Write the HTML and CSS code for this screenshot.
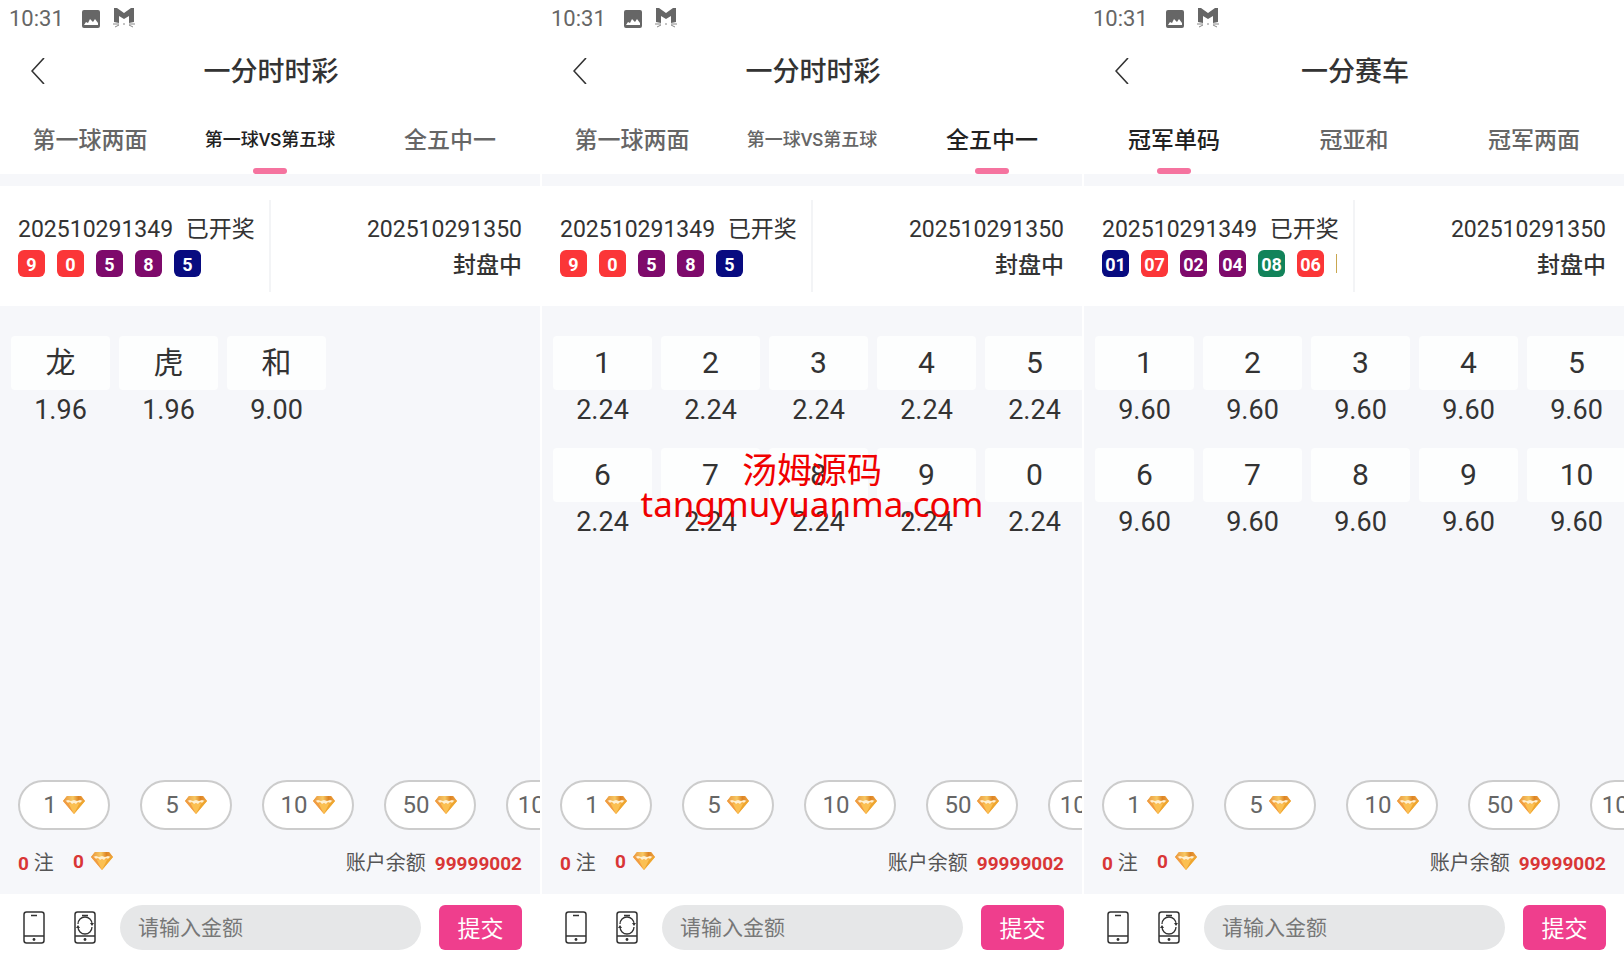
FILE: index.html
```html
<!DOCTYPE html>
<html lang="zh-CN">
<head>
  <meta charset="UTF-8" />
  <meta name="viewport" content="width=device-width, initial-scale=1" />
  <title>一分时时彩</title>
  <link rel="stylesheet" href="styles.css">
</head>
<body>
  <svg class="sprite" aria-hidden="true">
    <defs>
      <linearGradient id="gold" x1="0" y1="0" x2="1" y2="0">
        <stop offset="0" stop-color="#e8923a" />
        <stop offset="0.45" stop-color="#f7c964" />
        <stop offset="0.7" stop-color="#dd8424" />
        <stop offset="1" stop-color="#efa544" />
      </linearGradient>
      <symbol id="diamond" viewBox="0 0 22 18">
        <path d="M4 0h14l4 5-11 13L0 5z" fill="#f8b348" />
        <path d="M4 0h14l4 5H0z" fill="url(#gold)" />
        <path d="M2 5l3-1 3 1 3-1 3 1 3-1 3 1-2 2-3-1-2 2-2-1-2 1-2-2-3 1z" fill="#fff0d0" />
        <path d="M0 5l3 0 3 3 5 10z" fill="#f19c42" />
        <path d="M6 8l5 0 5 0-5 10z" fill="#fbc052" />
        <path d="M22 5l-3 0-3 3-5 10z" fill="#eea62f" />
      </symbol>
      <symbol id="picture" viewBox="0 0 18 18">
        <path fill-rule="evenodd" fill="#666" d="M2 0h14a2 2 0 0 1 2 2v14a2 2 0 0 1-2 2H2a2 2 0 0 1-2-2V2a2 2 0 0 1 2-2zM2 15h14v-2l-3-4-2 3-3-3-2 4-2-1z" />
      </symbol>
      <symbol id="mask" viewBox="0 0 22 21">
        <path fill="#666" d="M1 0h3l7 5 7-5h3v14l-5 1V8l-5 3-5-3v7l-5-1z" />
        <path fill="none" stroke="#888" d="M0 16l6 0M2 19l4-2M22 16l-6 0M20 19l-4-2M10 16h2" />
      </symbol>
      <symbol id="back" viewBox="0 0 14 26">
        <path fill="none" stroke="#333" stroke-width="1.6" d="M13 0L1 13l12 13" />
      </symbol>
      <symbol id="phone" viewBox="0 0 22 33">
        <rect x="1" y="1" width="20" height="31" rx="2.5" fill="none" stroke="#333" stroke-width="1.5" />
        <path fill="none" stroke="#333" stroke-width="1.5" d="M8 4.500h6M1 25h20" />
        <circle cx="11" cy="28.500" r="1.400" fill="#333" />
      </symbol>
      <symbol id="shake" viewBox="0 0 22 33">
        <rect x="1" y="1" width="20" height="31" rx="2.5" fill="none" stroke="#333" stroke-width="1.5" />
        <path fill="none" stroke="#333" stroke-width="1.5" d="M8 4.500h6M1 25h20" />
        <path fill="none" stroke="#333" stroke-width="1.300" d="M4 13a7 7 0 0 1 14 0M18 16a7 7 0 0 1-14 0" />
        <path fill="#333" d="M2 17l2-3 2 3zM20 12l-2 3-2-3z" />
        <circle cx="11" cy="28.500" r="1.400" fill="#333" />
      </symbol>
    </defs>
  </svg>

  <main class="screens">
    <section class="screen">
      <div class="status"><span>10:31</span><svg class="icon-picture"><use href="#picture" /></svg><svg class="icon-mask"><use href="#mask" /></svg></div>
      <header class="title-bar">
        <button class="back" aria-label="返回"><svg><use href="#back" /></svg></button>
        <h1>一分时时彩</h1>
      </header>
      <nav class="tabs">
        <button>第一球两面</button>
        <button class="small active">第一球VS第五球</button>
        <button>全五中一</button>
      </nav>
      <div class="draw">
        <div class="draw-last">
          <p>202510291349 <span>已开奖</span></p>
          <div class="balls"><b class="red">9</b><b class="red">0</b><b class="purple">5</b><b class="purple">8</b><b class="navy">5</b></div>
        </div>
        <div class="draw-next">
          <p>202510291350</p>
          <strong>封盘中</strong>
        </div>
      </div>
      <div class="bets">
        <div class="bet-grid">
          <button><span>龙</span>1.96</button>
          <button><span>虎</span>1.96</button>
          <button><span>和</span>9.00</button>
        </div>
      </div>
      <div class="chips">
        <button>1<svg><use href="#diamond" /></svg></button>
        <button>5<svg><use href="#diamond" /></svg></button>
        <button>10<svg><use href="#diamond" /></svg></button>
        <button>50<svg><use href="#diamond" /></svg></button>
        <button>100<svg><use href="#diamond" /></svg></button>
      </div>
      <div class="summary">
        <p><b>0</b> 注</p>
        <p class="stake"><b>0</b><svg><use href="#diamond" /></svg></p>
        <p class="balance">账户余额<b>99999002</b></p>
      </div>
      <form class="submit-bar">
        <button type="button" class="tool" aria-label="手机"><svg><use href="#phone" /></svg></button>
        <button type="button" class="tool" aria-label="摇一摇"><svg><use href="#shake" /></svg></button>
        <input type="text" placeholder="请输入金额" aria-label="请输入金额">
        <button type="button" class="submit">提交</button>
      </form>
    </section>

    <section class="screen">
      <div class="status"><span>10:31</span><svg class="icon-picture"><use href="#picture" /></svg><svg class="icon-mask"><use href="#mask" /></svg></div>
      <header class="title-bar">
        <button class="back" aria-label="返回"><svg><use href="#back" /></svg></button>
        <h1>一分时时彩</h1>
      </header>
      <nav class="tabs">
        <button>第一球两面</button>
        <button class="small">第一球VS第五球</button>
        <button class="active">全五中一</button>
      </nav>
      <div class="draw">
        <div class="draw-last">
          <p>202510291349 <span>已开奖</span></p>
          <div class="balls"><b class="red">9</b><b class="red">0</b><b class="purple">5</b><b class="purple">8</b><b class="navy">5</b></div>
        </div>
        <div class="draw-next">
          <p>202510291350</p>
          <strong>封盘中</strong>
        </div>
      </div>
      <div class="bets">
        <div class="bet-grid">
          <button><span>1</span>2.24</button>
          <button><span>2</span>2.24</button>
          <button><span>3</span>2.24</button>
          <button><span>4</span>2.24</button>
          <button><span>5</span>2.24</button>
          <button><span>6</span>2.24</button>
          <button><span>7</span>2.24</button>
          <button><span>8</span>2.24</button>
          <button><span>9</span>2.24</button>
          <button><span>0</span>2.24</button>
        </div>
      </div>
      <div class="chips">
        <button>1<svg><use href="#diamond" /></svg></button>
        <button>5<svg><use href="#diamond" /></svg></button>
        <button>10<svg><use href="#diamond" /></svg></button>
        <button>50<svg><use href="#diamond" /></svg></button>
        <button>100<svg><use href="#diamond" /></svg></button>
      </div>
      <div class="summary">
        <p><b>0</b> 注</p>
        <p class="stake"><b>0</b><svg><use href="#diamond" /></svg></p>
        <p class="balance">账户余额<b>99999002</b></p>
      </div>
      <form class="submit-bar">
        <button type="button" class="tool" aria-label="手机"><svg><use href="#phone" /></svg></button>
        <button type="button" class="tool" aria-label="摇一摇"><svg><use href="#shake" /></svg></button>
        <input type="text" placeholder="请输入金额" aria-label="请输入金额">
        <button type="button" class="submit">提交</button>
      </form>
    </section>

    <section class="screen">
      <div class="status"><span>10:31</span><svg class="icon-picture"><use href="#picture" /></svg><svg class="icon-mask"><use href="#mask" /></svg></div>
      <header class="title-bar">
        <button class="back" aria-label="返回"><svg><use href="#back" /></svg></button>
        <h1>一分赛车</h1>
      </header>
      <nav class="tabs">
        <button class="active">冠军单码</button>
        <button>冠亚和</button>
        <button>冠军两面</button>
      </nav>
      <div class="draw">
        <div class="draw-last">
          <p>202510291349 <span>已开奖</span></p>
          <div class="balls"><b class="navy">01</b><b class="red">07</b><b class="purple">02</b><b class="purple">04</b><b class="green">08</b><b class="red">06</b><b class="gold"></b></div>
        </div>
        <div class="draw-next">
          <p>202510291350</p>
          <strong>封盘中</strong>
        </div>
      </div>
      <div class="bets">
        <div class="bet-grid">
          <button><span>1</span>9.60</button>
          <button><span>2</span>9.60</button>
          <button><span>3</span>9.60</button>
          <button><span>4</span>9.60</button>
          <button><span>5</span>9.60</button>
          <button><span>6</span>9.60</button>
          <button><span>7</span>9.60</button>
          <button><span>8</span>9.60</button>
          <button><span>9</span>9.60</button>
          <button><span>10</span>9.60</button>
        </div>
      </div>
      <div class="chips">
        <button>1<svg><use href="#diamond" /></svg></button>
        <button>5<svg><use href="#diamond" /></svg></button>
        <button>10<svg><use href="#diamond" /></svg></button>
        <button>50<svg><use href="#diamond" /></svg></button>
        <button>100<svg><use href="#diamond" /></svg></button>
      </div>
      <div class="summary">
        <p><b>0</b> 注</p>
        <p class="stake"><b>0</b><svg><use href="#diamond" /></svg></p>
        <p class="balance">账户余额<b>99999002</b></p>
      </div>
      <form class="submit-bar">
        <button type="button" class="tool" aria-label="手机"><svg><use href="#phone" /></svg></button>
        <button type="button" class="tool" aria-label="摇一摇"><svg><use href="#shake" /></svg></button>
        <input type="text" placeholder="请输入金额" aria-label="请输入金额">
        <button type="button" class="submit">提交</button>
      </form>
    </section>

    <div class="watermark">汤姆源码<br>tangmuyuanma.com</div>
  </main>
</body>
</html>
```
FILE: styles.css
```css
* { box-sizing: border-box; }
body { margin: 0; background: #fff; color: #333; font-family: Roboto, "Noto Sans CJK SC", sans-serif; }
p, h1 { margin: 0; }
button, input { font: inherit; color: inherit; border: 0; padding: 0; background: none; }
button { cursor: pointer; }
svg { display: block; flex: none; }
.sprite { position: absolute; width: 0; height: 0; }

.screens { position: relative; display: grid; grid-template-columns: repeat(3, minmax(0, 1fr)); gap: 2px; min-height: 100vh; }
.screen { display: flex; flex-direction: column; overflow: hidden; background: #f6f7fa; }

/* top of the screen */
.status { display: flex; align-items: center; height: 37px; padding-left: 9px; background: #fff; color: #666; font-size: 22px; }
.icon-picture { width: 18px; height: 18px; margin-left: 18px; }
.icon-mask { width: 22px; height: 21px; margin-left: 13px; }
.title-bar { display: grid; grid-template-columns: 76px 1fr 74px; align-items: center; height: 67px; background: #fff; }
.title-bar h1 { padding-top: 2px; font-size: 27px; font-weight: 500; line-height: 40px; text-align: center; }
.back { display: flex; justify-content: center; }
.back svg { width: 14px; height: 26px; }
.tabs { display: grid; grid-template-columns: repeat(3, 1fr); height: 70px; background: #fff; }
.tabs button { position: relative; padding-bottom: 2px; color: #666; font-size: 23px; font-weight: 500; }
.tabs .small { font-size: 18px; }
.tabs .active { color: #222; }
.tabs .active::after { content: ""; position: absolute; left: 50%; bottom: 0; width: 34px; height: 6px; margin-left: -17px; border-radius: 3px; background: #f5739f; }

/* draw results */
.draw { display: grid; grid-template-columns: 271px 1fr; grid-template-columns: calc(50% + 1px) 1fr; height: 120px; margin-top: 12px; padding: 14px 0; background: #fff; font-size: 23px; }
.draw p { line-height: 34px; white-space: nowrap; }
.draw p span { margin-left: 7px; }
.draw-last { padding: 13px 16px 0 18px; border-right: 2px solid #f3f4f6; overflow: hidden; }
.draw-next { padding: 13px 18px 0; text-align: right; }
.draw-next strong { display: block; margin-top: 4px; font-weight: 500; line-height: 30px; }
.balls { display: flex; gap: 12px; margin-top: 3px; overflow: hidden; }
.balls b { flex: none; width: 27px; height: 27px; border-radius: 6px; color: #fff; font-size: 18px; line-height: 29px; text-align: center; }
.red { background: #fb3638; }
.purple { background: #7e0a6b; }
.navy { background: #080b80; }
.green { background: #12835a; }
.balls .gold { height: 19px; margin-top: 4px; border-radius: 0; background: #c9a750; }

/* bets */
.bets { flex: 1; overflow: hidden; padding: 30px 0 0 11px; }
.bet-grid { display: grid; grid-template-columns: repeat(5, calc(20% - 9px)); gap: 18px 9px; width: calc(100% + 11px); }
.bet-grid button { font-size: 27px; line-height: 40px; }
.bet-grid span { display: block; border-radius: 4px; background: #fdfefe; font-size: 30px; line-height: 54px; }

/* chips and totals */
.chips { display: flex; gap: 30px; padding: 0 18px; overflow: hidden; }
.chips button { display: flex; flex: none; align-items: center; justify-content: center; gap: 6px; width: 92px; height: 50px; border: 2px solid #ccc; border-radius: 25px; background: #fff; color: #666; font-size: 24px; }
.chips svg, .summary svg { width: 22px; height: 18px; }
.summary { display: flex; align-items: center; height: 64px; padding: 0 18px 2px; color: #555; font-size: 20px; }
.summary b { color: #d93636; font-size: 19px; }
.stake { display: flex; align-items: center; gap: 7px; margin-left: 19px; }
.balance { margin-left: auto; }
.balance b { margin-left: 9px; }

/* bottom bar */
.submit-bar { display: flex; align-items: center; height: 66px; padding: 0 18px 0 23px; background: #fff; }
.tool { margin-right: 29px; }
.tool + .tool { margin-right: 24px; }
.tool svg { width: 22px; height: 33px; }
.submit-bar input { flex: 1; min-width: 0; height: 45px; padding: 2px 18px 0; border-radius: 23px; background: #e6e7e8; font-size: 21px; }
.submit-bar input::placeholder { color: #777; }
.submit { width: 83px; height: 45px; margin-left: 18px; border-radius: 6px; background: #ef3e8d; color: #fff; font-size: 23px; }

.watermark { position: absolute; top: 453px; left: 0; right: 0; color: #f00000; font-family: "Noto Sans", "Noto Sans CJK SC", sans-serif; font-size: 35px; line-height: 34px; text-align: center; pointer-events: none; }
```
